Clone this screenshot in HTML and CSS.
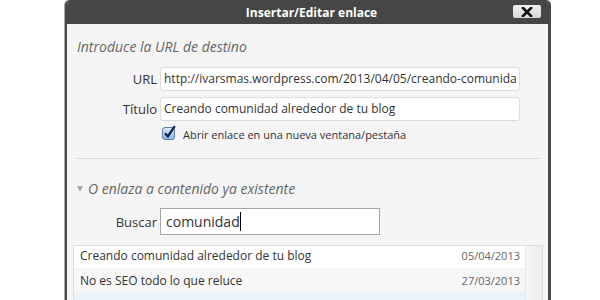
FILE: index.html
```html
<!DOCTYPE html>
<html lang="es">
<head>
<meta charset="utf-8">
<title>Insertar/Editar enlace</title>
<link rel="stylesheet" href="styles.css">
</head>
<body>
<div class="dialog">
  <div class="titlebar">
    <span class="spacer"></span>
    <span class="title">Insertar/Editar enlace</span>
    <span class="close"><svg width="12" height="10" viewBox="0 0 12 10"><path d="M2 1 L10 9 M10 1 L2 9" stroke="#111" stroke-width="2.6" stroke-linecap="square"/></svg></span>
  </div>
  <div class="content">
    <p class="heading">Introduce la URL de destino</p>
    <div class="field">
      <label class="label">URL</label>
      <div class="input">http://ivarsmas.wordpress.com/2013/04/05/creando-comunida</div>
    </div>
    <div class="field">
      <label class="label">Título</label>
      <div class="input">Creando comunidad alrededor de tu blog</div>
    </div>
    <div class="check-row">
      <svg class="checkbox" width="15" height="15" viewBox="0 0 15 15">
        <defs>
          <linearGradient id="cb" x1="0" y1="0" x2="0" y2="1">
            <stop offset="0" stop-color="#d8e9fb"/>
            <stop offset="1" stop-color="#8db8e6"/>
          </linearGradient>
        </defs>
        <rect x="0.5" y="2.5" width="12" height="12" rx="2.5" fill="url(#cb)" stroke="#5b7fa6"/>
        <path d="M3 8.2 L5.8 11.5 L12.8 1.2" fill="none" stroke="#16264d" stroke-width="2.3" stroke-linejoin="round"/>
      </svg>
      <span class="check-label">Abrir enlace en una nueva ventana/pestaña</span>
    </div>
    <div class="divider"></div>
    <p class="heading toggle"><span class="tri"></span>O enlaza a contenido ya existente</p>
    <div class="field search">
      <label class="label">Buscar</label>
      <div class="search-input"><span class="caret">comunidad</span></div>
    </div>
    <div class="results">
      <ul class="list">
        <li class="item first"><span class="item-title">Creando comunidad alrededor de tu blog</span><span class="date">05/04/2013</span></li>
        <li class="item alt"><span class="item-title">No es SEO todo lo que reluce</span><span class="date">27/03/2013</span></li>
        <li class="item sel"><span class="item-title"></span><span class="date"></span></li>
      </ul>
      <div class="scrollbar"></div>
    </div>
  </div>
</div>
</body>
</html>
```

FILE: styles.css
```css
html, body {
  margin: 0;
  padding: 0;
  background: #ffffff;
  width: 600px;
  height: 300px;
  overflow: hidden;
  font-family: "Open Sans", "DejaVu Sans", sans-serif;
}

.dialog {
  margin-left: 65px;
  width: 486px;
  height: 300px;
  box-sizing: border-box;
  border-left: 2px solid #4a4a4a;
  border-right: 3px solid #4a4a4a;
  box-shadow: -1px 0 0 #a8a8a8;
  border-radius: 5px 5px 0 0;
  background: #f5f5f5;
  overflow: hidden;
  display: flex;
  flex-direction: column;
}

.titlebar {
  height: 24px;
  flex: none;
  background: #464646;
  display: grid;
  grid-template-columns: 1fr auto 1fr;
  align-items: center;
}

.title {
  color: #ffffff;
  font-weight: 700;
  font-size: 12px;
  padding-left: 8px;
}

.close {
  justify-self: end;
  margin-right: 7px;
  width: 28px;
  height: 13px;
  margin-top: -1px;
  background: linear-gradient(#f0f0f0, #d8d8d8);
  border-radius: 2px;
  display: flex;
  align-items: center;
  justify-content: center;
}

.content {
  padding: 13px 0 0 0;
  display: flex;
  flex-direction: column;
}

.heading {
  margin: 0 0 10px 10px;
  font-size: 14px;
  line-height: 20px;
  font-style: italic;
  color: #666666;
}

.field {
  display: flex;
  align-items: center;
  gap: 3px;
  margin-bottom: 6px;
}

.label {
  width: 90px;
  text-align: right;
  font-size: 13px;
  color: #333333;
}

.input {
  width: 360px;
  height: 24px;
  box-sizing: border-box;
  border: 1px solid #dcdcdc;
  border-radius: 3px;
  background: #ffffff;
  font-size: 12px;
  line-height: 22px;
  padding: 0 3px;
  color: #333333;
  white-space: nowrap;
}

.check-row {
  display: flex;
  align-items: center;
  padding-left: 95px;
  height: 16px;
  margin-top: -1px;
}

.checkbox {
  margin-top: -3px;
}

.check-label {
  margin-left: 6px;
  font-size: 11px;
  color: #333333;
}

.divider {
  margin: 16px 7px 20px 8px;
  height: 1px;
  background: #dddddd;
}

.toggle {
  display: flex;
  align-items: center;
}

.tri {
  width: 0;
  height: 0;
  border-left: 3.5px solid transparent;
  border-right: 3.5px solid transparent;
  border-top: 6px solid #aaaaaa;
  margin-right: 5px;
}

.search {
  margin-top: -1px;
  margin-bottom: 10px;
}

.search-input {
  width: 220px;
  height: 27px;
  box-sizing: border-box;
  border: 1px solid #a5a5a5;
  background: #ffffff;
  font-size: 14px;
  line-height: 25px;
  padding: 0 5px;
  color: #333333;
}

.caret {
  border-right: 1px solid #000000;
}

.results {
  margin-left: 6px;
  width: 470px;
  flex: 1;
  box-sizing: border-box;
  border: 1px solid #dddddd;
  border-bottom: none;
  display: flex;
  background: #ffffff;
  height: 60px;
}

.list {
  list-style: none;
  margin: 0;
  padding: 0;
  flex: 1;
}

.item {
  display: flex;
  justify-content: space-between;
  align-items: center;
  height: 24px;
  padding: 0 5px 0 6px;
  box-sizing: border-box;
  border-bottom: 1px solid #f1f1f1;
  font-size: 12px;
  color: #333333;
}

.item.first {
  height: 23px;
  padding-bottom: 3px;
}

.item.alt {
  background: #f7f7f7;
}

.item.sel {
  background: #eaf2fa;
}

.date {
  font-size: 11px;
  color: #666666;
}

.scrollbar {
  width: 16px;
  flex: none;
  border-left: 1px solid #e6e6e6;
  background: linear-gradient(to right, #f7f7f7, #ececec);
}
```
